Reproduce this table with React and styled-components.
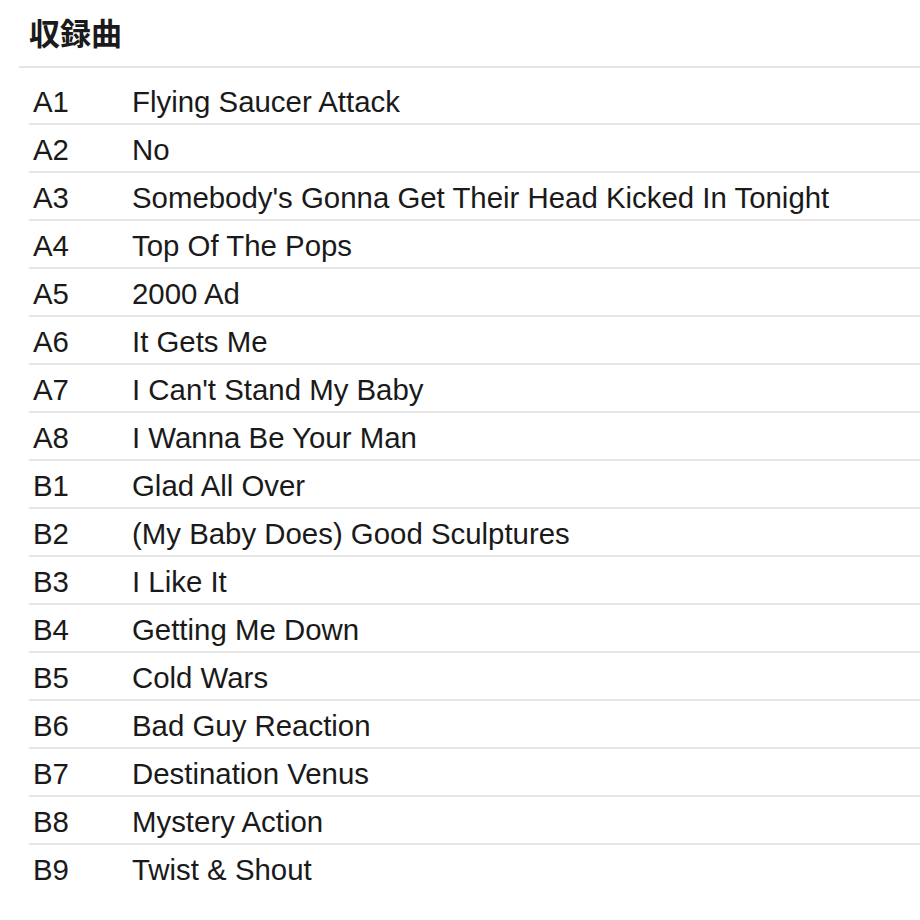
import styled, { createGlobalStyle } from "styled-components";

const GlobalStyle = createGlobalStyle`
  html, body {
    margin: 0;
    padding: 0;
    background: #fff;
  }
  body {
    font-family: "Liberation Sans", Arial, "Noto Sans CJK JP", sans-serif;
    color: #1a1a1a;
  }
`;

const tracks = [
  ["A1", "Flying Saucer Attack"],
  ["A2", "No"],
  ["A3", "Somebody's Gonna Get Their Head Kicked In Tonight"],
  ["A4", "Top Of The Pops"],
  ["A5", "2000 Ad"],
  ["A6", "It Gets Me"],
  ["A7", "I Can't Stand My Baby"],
  ["A8", "I Wanna Be Your Man"],
  ["B1", "Glad All Over"],
  ["B2", "(My Baby Does) Good Sculptures"],
  ["B3", "I Like It"],
  ["B4", "Getting Me Down"],
  ["B5", "Cold Wars"],
  ["B6", "Bad Guy Reaction"],
  ["B7", "Destination Venus"],
  ["B8", "Mystery Action"],
  ["B9", "Twist & Shout"],
];

const Section = styled.section`
  padding: 14px 0 0 19px;
`;

const Heading = styled.h2`
  margin: 0;
  padding: 0 0 10px 10px;
  font-family: "Liberation Sans", "Noto Sans CJK JP", sans-serif;
  font-size: 31px;
  font-weight: 700;
  line-height: 42px;
  border-bottom: 2px solid #e6e6e6;
`;

const TrackList = styled.ol`
  list-style: none;
  margin: 9px 0 0 10px;
  padding: 0;
`;

const Track = styled.li`
  display: grid;
  grid-template-columns: 103px 1fr;
  align-items: center;
  height: 46px;
  font-size: 29.4px;
  border-bottom: 2px solid #e6e6e6;

  &:last-child {
    border-bottom: none;
  }
`;

const Position = styled.span`
  padding-left: 4px;
  padding-top: 4px;
`;

const Title = styled.span`
  padding-top: 4px;
  white-space: nowrap;
`;

export default function App() {
  return (
    <>
      <GlobalStyle />
      <Section>
        <Heading>収録曲</Heading>
        <TrackList>
          {tracks.map(([pos, title]) => (
            <Track key={pos}>
              <Position>{pos}</Position>
              <Title>{title}</Title>
            </Track>
          ))}
        </TrackList>
      </Section>
    </>
  );
}
